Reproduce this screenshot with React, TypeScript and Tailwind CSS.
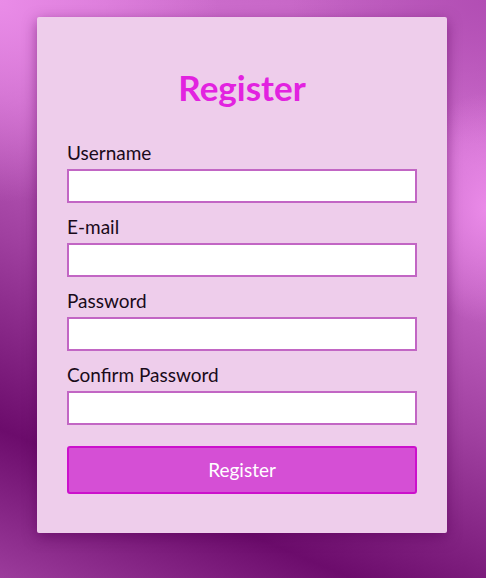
import React from "react";

const fields = ["Username", "E-mail", "Password", "Confirm Password"];

export default function App() {
  return (
    <div className="min-h-[578px] w-full overflow-hidden pt-[17px] pl-[37px] font-['Lato','Open_Sans',sans-serif] bg-[radial-gradient(ellipse_16%_20%_at_100%_36%,#ea8ae8_0%,rgba(234,138,232,0)_100%),radial-gradient(ellipse_45%_35%_at_0%_0%,#ea8ce8_0%,rgba(234,140,232,0)_100%),radial-gradient(ellipse_40%_25%_at_100%_0%,#b24eb4_0%,rgba(178,78,180,0)_100%),linear-gradient(203deg,#c060c0_0%,#d070d0_22%,#c060c0_38%,#a040a0_56%,#6c0c6c_81%,#9c3c9c_100%)]">
      <div className="flex w-[410px] flex-col rounded-[2px] bg-[#eecdeb] px-[30px] pt-[49px] pb-[39px] shadow-[0_4px_14px_rgba(90,0,90,0.55)]">
        <h1 className="mb-[33px] text-center text-[35px] font-bold leading-[42px] text-[#e222e0]">
          Register
        </h1>
        {fields.map((f) => (
          <div key={f} className="mb-[12px] flex flex-col">
            <label className="mb-[4px] text-[19px] leading-[24px] text-[#1a0a1a]">{f}</label>
            <input
              type={f.includes("assword") ? "password" : "text"}
              className="h-[34px] w-[350px] border-2 border-[#c266c4] bg-white outline-none"
            />
          </div>
        ))}
        <button className="mt-[9px] h-[48px] w-[350px] rounded-[3px] border-2 border-[#cc10cc] bg-[#d54fd5] text-[19px] text-white">
          Register
        </button>
      </div>
    </div>
  );
}
